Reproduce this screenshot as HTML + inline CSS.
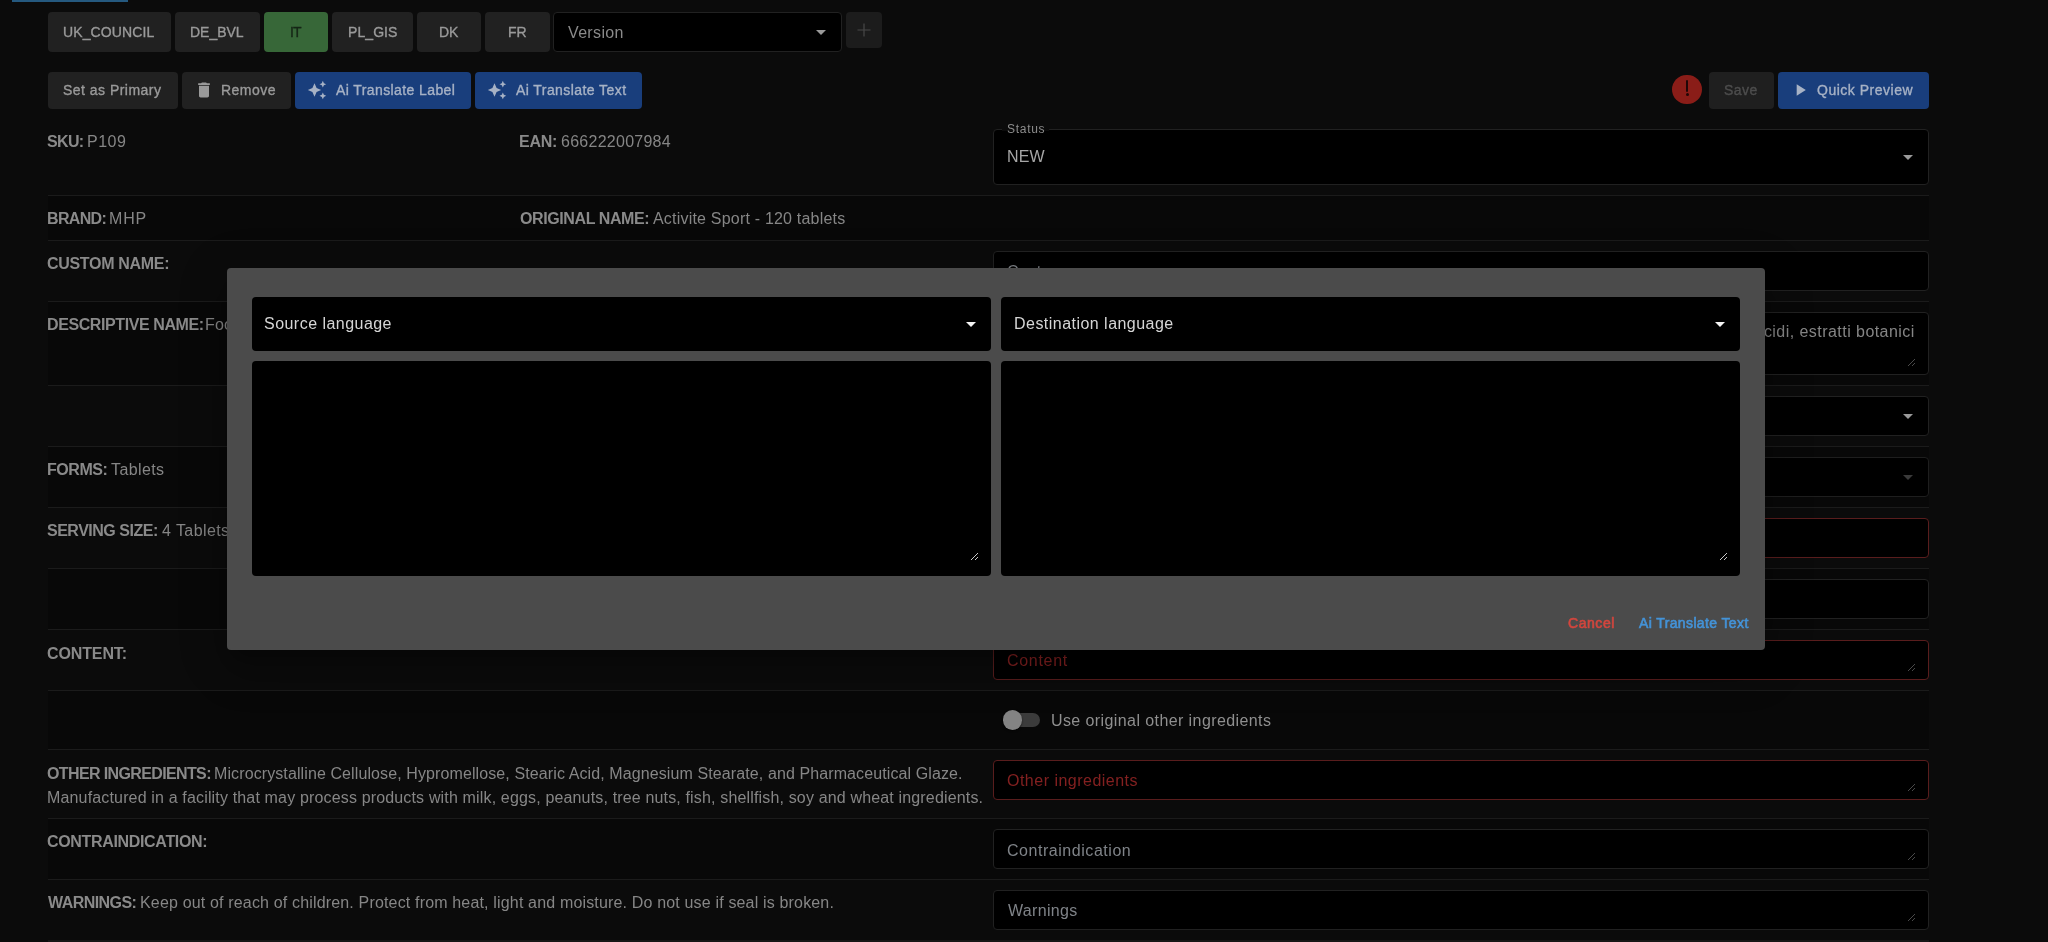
<!DOCTYPE html>
<html lang="en">
<head>
<meta charset="utf-8">
<title>Label editor</title>
<style>
*{box-sizing:border-box;margin:0;padding:0}
html,body{width:2048px;height:942px;overflow:hidden;background:#0b0b0b}
body{position:relative;font-family:"Liberation Sans",sans-serif;font-size:16px;color:#8d8d8d}
.abs{position:absolute}
.topbar{left:12px;top:0;width:115.500px;height:2px;background:#25597f}
.btn{position:absolute;height:36.500px;border-radius:4px;background:#212121}
.btn.tab{height:40px;top:12px}
.btn.green{background:#376738}
.btn.blue{background:#193e7c}
.btn.dis{background:#1f1f1f}
.btn svg{position:absolute}
.stripe{position:absolute;left:48px;width:1881px;background:#080808}
.sep{position:absolute;left:48px;width:1881px;height:1px;background:#1b1b1b}
.t{position:absolute;white-space:nowrap;will-change:transform}
.inp{position:absolute;left:993px;width:936px;height:40px;background:#000;border:1px solid #212121;border-radius:4px}
.inp.err{border-color:#591d1d}
.arrow{position:absolute;width:0;height:0;border-left:5px solid transparent;border-right:5px solid transparent;border-top:5px solid #9a9a9a}
.grip{position:absolute;width:9px;height:9px}
.dialog{left:227px;top:268px;width:1538px;height:382px;background:#4b4b4b;border-radius:4px;box-shadow:0 11px 15px -7px rgba(0,0,0,.25),0 24px 38px 3px rgba(0,0,0,.16),0 9px 46px 8px rgba(0,0,0,.14)}
.dsel{position:absolute;top:29px;width:739px;height:54px;background:#000;border-radius:4px}
.dta{position:absolute;top:93px;width:739px;height:215px;background:#000;border-radius:4px}
</style>
</head>
<body>
<div class="abs topbar"></div>

<!-- striped rows -->
<div class="stripe" style="top:196px;height:44px"></div>
<div class="stripe" style="top:302px;height:83px"></div>
<div class="stripe" style="top:447px;height:60px"></div>
<div class="stripe" style="top:569px;height:60px"></div>
<div class="stripe" style="top:691px;height:58px"></div>
<div class="stripe" style="top:819px;height:60px"></div>

<!-- tabs -->
<div class="btn tab" style="left:48px;width:123px"></div>
<div class="btn tab" style="left:175px;width:85px"></div>
<div class="btn tab green" style="left:264px;width:64px"></div>
<div class="btn tab" style="left:332px;width:81px"></div>
<div class="btn tab" style="left:417px;width:64px"></div>
<div class="btn tab" style="left:485px;width:65px"></div>
<div class="inp" style="left:553px;top:12px;width:289px;height:40px"><i class="arrow" style="left:262px;top:17px"></i></div>
<div class="btn" style="left:846px;top:12px;width:36px;height:36px;background:#1c1c1c">
<svg width="36" height="36" viewBox="0 0 36 36" style="left:0;top:0"><path d="M18 11.500v13M11.500 18h13" stroke="#484848" stroke-width="1.200" fill="none"/></svg></div>

<!-- actions -->
<div class="btn" style="left:48px;top:72px;width:130px"></div>
<div class="btn" style="left:182px;top:72px;width:109px">
<svg width="20" height="20" viewBox="0 0 24 24" style="left:12px;top:8px"><path fill="#9a9a9a" d="M6 19c0 1.100.900 2 2 2h8c1.100 0 2-.900 2-2V7H6v12zM19 4h-3.500l-1-1h-5l-1 1H5v2h14V4z"/></svg></div>
<div class="btn blue" style="left:295px;top:72px;width:176px">
<svg width="20" height="20" viewBox="0 0 24 24" style="left:12px;top:8px"><path fill="#a7b2c5" d="M19 9l1.250-2.750L23 5l-2.750-1.250L19 1l-1.250 2.750L15 5l2.750 1.250L19 9zm-7.500.500L9 4 6.500 9.500 1 12l5.500 2.500L9 20l2.500-5.500L17 12l-5.500-2.500zM19 15l-1.250 2.750L15 19l2.750 1.250L19 23l1.250-2.750L23 19l-2.750-1.250L19 15z"/></svg></div>
<div class="btn blue" style="left:475px;top:72px;width:167px">
<svg width="20" height="20" viewBox="0 0 24 24" style="left:12px;top:8px"><path fill="#a7b2c5" d="M19 9l1.250-2.750L23 5l-2.750-1.250L19 1l-1.250 2.750L15 5l2.750 1.250L19 9zm-7.500.500L9 4 6.500 9.500 1 12l5.500 2.500L9 20l2.500-5.500L17 12l-5.500-2.500zM19 15l-1.250 2.750L15 19l2.750 1.250L19 23l1.250-2.750L23 19l-2.750-1.250L19 15z"/></svg></div>

<div class="abs" style="left:1672.400px;top:74.800px;width:29.400px;height:29.400px;border-radius:50%;background:#8a1d18"></div>
<div class="abs" style="left:1685.800px;top:80px;width:2.600px;height:11.500px;background:#200707;border-radius:1px"></div>
<div class="abs" style="left:1685.600px;top:93.200px;width:3px;height:3.200px;background:#200707;border-radius:1.500px"></div>
<div class="btn dis" style="left:1709px;top:72px;width:65px"></div>
<div class="btn blue" style="left:1778px;top:72px;width:151px">
<svg width="20" height="20" viewBox="0 0 24 24" style="left:12px;top:8px"><path fill="#a7b2c5" d="M8 5v14l11-7z"/></svg></div>

<!-- row separators -->
<div class="sep" style="top:195px"></div>
<div class="sep" style="top:240px"></div>
<div class="sep" style="top:301px"></div>
<div class="sep" style="top:385px"></div>
<div class="sep" style="top:446px"></div>
<div class="sep" style="top:507px"></div>
<div class="sep" style="top:568px"></div>
<div class="sep" style="top:629px"></div>
<div class="sep" style="top:690px"></div>
<div class="sep" style="top:749px"></div>
<div class="sep" style="top:818px"></div>
<div class="sep" style="top:879px"></div>
<div class="sep" style="top:940px;height:2px;background:#161616"></div>

<!-- right column fields -->
<div class="inp" style="top:129px;height:56px"><i class="arrow" style="left:909px;top:25px"></i></div>
<div class="abs" style="left:1002px;top:128px;width:47px;height:3px;background:#0b0b0b"></div>
<div class="inp" style="top:251px"></div>
<div class="inp" style="top:312px;height:63px"><svg class="grip" style="right:12px;bottom:7px" viewBox="0 0 9 9"><path d="M1 8L8 1M5 8L8 5" stroke="#4a4a4a" stroke-width="1" fill="none"/></svg></div>
<div class="inp" style="top:396px"><i class="arrow" style="left:909px;top:17px"></i></div>
<div class="inp" style="top:457px;border-color:#1e1e1e"><i class="arrow" style="left:909px;top:17px;border-top-color:#3a3a3a"></i></div>
<div class="inp err" style="top:518px"></div>
<div class="inp" style="top:579px"></div>
<div class="inp err" style="top:640px"><svg class="grip" style="right:12px;bottom:7px" viewBox="0 0 9 9"><path d="M1 8L8 1M5 8L8 5" stroke="#4a4a4a" stroke-width="1" fill="none"/></svg></div>
<div class="abs" style="left:1005px;top:713px;width:35px;height:14px;border-radius:7px;background:#3b3b3b"></div>
<div class="abs" style="left:1002.500px;top:710.100px;width:19.700px;height:19.700px;border-radius:50%;background:#838383;box-shadow:0 1px 2px rgba(0,0,0,.6)"></div>
<div class="inp err" style="top:760px"><svg class="grip" style="right:12px;bottom:7px" viewBox="0 0 9 9"><path d="M1 8L8 1M5 8L8 5" stroke="#4a4a4a" stroke-width="1" fill="none"/></svg></div>
<div class="inp" style="top:829px"><svg class="grip" style="right:12px;bottom:7px" viewBox="0 0 9 9"><path d="M1 8L8 1M5 8L8 5" stroke="#4a4a4a" stroke-width="1" fill="none"/></svg></div>
<div class="inp" style="top:890px"><svg class="grip" style="right:12px;bottom:7px" viewBox="0 0 9 9"><path d="M1 8L8 1M5 8L8 5" stroke="#4a4a4a" stroke-width="1" fill="none"/></svg></div>

<!-- page text -->
<div class="t" style="left:62.72px;top:22px;font-size:14px;line-height:20px;height:20px;font-weight:400;color:#9a9a9a;letter-spacing:0.122px;-webkit-text-stroke:.35px currentColor;">UK_COUNCIL</div>
<div class="t" style="left:190.19px;top:22px;font-size:14px;line-height:20px;height:20px;font-weight:400;color:#9a9a9a;letter-spacing:-0.021px;-webkit-text-stroke:.35px currentColor;">DE_BVL</div>
<div class="t" style="left:290.48px;top:22px;font-size:14px;line-height:20px;height:20px;font-weight:400;color:#152616;letter-spacing:-0.871px;-webkit-text-stroke:.35px currentColor;">IT</div>
<div class="t" style="left:347.69px;top:22px;font-size:14px;line-height:20px;height:20px;font-weight:400;color:#9a9a9a;letter-spacing:0.077px;-webkit-text-stroke:.35px currentColor;">PL_GIS</div>
<div class="t" style="left:439.44px;top:22px;font-size:14px;line-height:20px;height:20px;font-weight:400;color:#9a9a9a;letter-spacing:-0.109px;-webkit-text-stroke:.35px currentColor;">DK</div>
<div class="t" style="left:507.94px;top:22px;font-size:14px;line-height:20px;height:20px;font-weight:400;color:#9a9a9a;letter-spacing:-0.034px;-webkit-text-stroke:.35px currentColor;">FR</div>
<div class="t" style="left:568.02px;top:21px;font-size:16px;line-height:24px;height:24px;font-weight:400;color:#8a8a8a;letter-spacing:0.342px;">Version</div>
<div class="t" style="left:63.28px;top:80px;font-size:14px;line-height:20px;height:20px;font-weight:400;color:#9a9a9a;letter-spacing:0.474px;-webkit-text-stroke:.35px currentColor;">Set as Primary</div>
<div class="t" style="left:220.94px;top:80px;font-size:14px;line-height:20px;height:20px;font-weight:400;color:#9a9a9a;letter-spacing:0.471px;-webkit-text-stroke:.35px currentColor;">Remove</div>
<div class="t" style="left:336.16px;top:80px;font-size:14px;line-height:20px;height:20px;font-weight:400;color:#a7b2c5;letter-spacing:0.400px;-webkit-text-stroke:.35px currentColor;">Ai Translate Label</div>
<div class="t" style="left:515.66px;top:80px;font-size:14px;line-height:20px;height:20px;font-weight:400;color:#a7b2c5;letter-spacing:0.425px;-webkit-text-stroke:.35px currentColor;">Ai Translate Text</div>
<div class="t" style="left:1724.33px;top:80px;font-size:14px;line-height:20px;height:20px;font-weight:400;color:#4d4d4d;letter-spacing:0.429px;-webkit-text-stroke:.35px currentColor;">Save</div>
<div class="t" style="left:1817.33px;top:80px;font-size:14px;line-height:20px;height:20px;font-weight:400;color:#a7b2c5;letter-spacing:0.512px;-webkit-text-stroke:.35px currentColor;">Quick Preview</div>
<div class="t" style="left:47.32px;top:130px;font-size:16px;line-height:24px;height:24px;font-weight:700;color:#8a8a8a;letter-spacing:-0.674px;">SKU:</div>
<div class="t" style="left:86.73px;top:130px;font-size:16px;line-height:24px;height:24px;font-weight:400;color:#868686;letter-spacing:0.471px;">P109</div>
<div class="t" style="left:519.44px;top:130px;font-size:16px;line-height:24px;height:24px;font-weight:700;color:#8a8a8a;letter-spacing:-0.247px;">EAN:</div>
<div class="t" style="left:560.50px;top:130px;font-size:16px;line-height:24px;height:24px;font-weight:400;color:#868686;letter-spacing:0.263px;">666222007984</div>
<div class="t" style="left:46.94px;top:207px;font-size:16px;line-height:24px;height:24px;font-weight:700;color:#8a8a8a;letter-spacing:-0.668px;">BRAND:</div>
<div class="t" style="left:109.03px;top:207px;font-size:16px;line-height:24px;height:24px;font-weight:400;color:#868686;letter-spacing:0.825px;">MHP</div>
<div class="t" style="left:519.84px;top:207px;font-size:16px;line-height:24px;height:24px;font-weight:700;color:#8a8a8a;letter-spacing:-0.400px;">ORIGINAL NAME:</div>
<div class="t" style="left:652.71px;top:207px;font-size:16px;line-height:24px;height:24px;font-weight:400;color:#868686;letter-spacing:0.200px;">Activite Sport - 120 tablets</div>
<div class="t" style="left:47.35px;top:252px;font-size:16px;line-height:24px;height:24px;font-weight:700;color:#8a8a8a;letter-spacing:-0.310px;">CUSTOM NAME:</div>
<div class="t" style="left:46.94px;top:313px;font-size:16px;line-height:24px;height:24px;font-weight:700;color:#8a8a8a;letter-spacing:-0.402px;">DESCRIPTIVE NAME:</div>
<div class="t" style="left:205.23px;top:313px;font-size:16px;line-height:24px;height:24px;font-weight:400;color:#868686;letter-spacing:0.150px;">Food supplement</div>
<div class="t" style="left:46.94px;top:458px;font-size:16px;line-height:24px;height:24px;font-weight:700;color:#8a8a8a;letter-spacing:-0.448px;">FORMS:</div>
<div class="t" style="left:111.09px;top:458px;font-size:16px;line-height:24px;height:24px;font-weight:400;color:#868686;letter-spacing:0.385px;">Tablets</div>
<div class="t" style="left:47.32px;top:519px;font-size:16px;line-height:24px;height:24px;font-weight:700;color:#8a8a8a;letter-spacing:-0.485px;">SERVING SIZE:</div>
<div class="t" style="left:161.67px;top:519px;font-size:16px;line-height:24px;height:24px;font-weight:400;color:#868686;letter-spacing:0.420px;">4 Tablets</div>
<div class="t" style="left:47.35px;top:642px;font-size:16px;line-height:24px;height:24px;font-weight:700;color:#8a8a8a;letter-spacing:-0.115px;">CONTENT:</div>
<div class="t" style="left:47.34px;top:762px;font-size:16px;line-height:24px;height:24px;font-weight:700;color:#8a8a8a;letter-spacing:-0.626px;">OTHER INGREDIENTS:</div>
<div class="t" style="left:213.93px;top:762px;font-size:16px;line-height:24px;height:24px;font-weight:400;color:#868686;letter-spacing:0.104px;">Microcrystalline Cellulose, Hypromellose, Stearic Acid, Magnesium Stearate, and Pharmaceutical Glaze.</div>
<div class="t" style="left:46.73px;top:786px;font-size:16px;line-height:24px;height:24px;font-weight:400;color:#868686;letter-spacing:0.158px;">Manufactured in a facility that may process products with milk, eggs, peanuts, tree nuts, fish, shellfish, soy and wheat ingredients.</div>
<div class="t" style="left:47.35px;top:830px;font-size:16px;line-height:24px;height:24px;font-weight:700;color:#8a8a8a;letter-spacing:-0.332px;">CONTRAINDICATION:</div>
<div class="t" style="left:47.89px;top:891px;font-size:16px;line-height:24px;height:24px;font-weight:700;color:#8a8a8a;letter-spacing:-0.552px;">WARNINGS:</div>
<div class="t" style="left:139.73px;top:891px;font-size:16px;line-height:24px;height:24px;font-weight:400;color:#868686;letter-spacing:0.165px;">Keep out of reach of children. Protect from heat, light and moisture. Do not use if seal is broken.</div>
<div class="t" style="left:1006.90px;top:121px;font-size:12px;line-height:16px;height:16px;font-weight:400;color:#8c8c8c;letter-spacing:0.712px;">Status</div>
<div class="t" style="left:1006.63px;top:145px;font-size:16px;line-height:24px;height:24px;font-weight:400;color:#a6a6a6;letter-spacing:0.183px;">NEW</div>
<div class="t" style="left:1006.90px;top:260px;font-size:16px;line-height:24px;height:24px;font-weight:400;color:#7f8388;letter-spacing:0.450px;">Custom name</div>
<div class="t" style="right:132.95px;top:320px;font-size:16px;line-height:24px;height:24px;font-weight:400;color:#858585;letter-spacing:0.450px;">Integratore alimentare con vitamine, minerali, aminoacidi, estratti botanici</div>
<div class="t" style="left:1006.70px;top:649px;font-size:16px;line-height:24px;height:24px;font-weight:400;color:#832020;letter-spacing:0.687px;">Content</div>
<div class="t" style="left:1050.50px;top:709px;font-size:16px;line-height:24px;height:24px;font-weight:400;color:#8f8f8f;letter-spacing:0.409px;">Use original other ingredients</div>
<div class="t" style="left:1006.90px;top:769px;font-size:16px;line-height:24px;height:24px;font-weight:400;color:#832020;letter-spacing:0.488px;">Other ingredients</div>
<div class="t" style="left:1006.90px;top:839px;font-size:16px;line-height:24px;height:24px;font-weight:400;color:#7f8388;letter-spacing:0.542px;">Contraindication</div>
<div class="t" style="left:1007.72px;top:899px;font-size:16px;line-height:24px;height:24px;font-weight:400;color:#7f8388;letter-spacing:0.334px;">Warnings</div>

<!-- dialog -->
<div class="abs dialog">
  <div class="dsel" style="left:25px"><i class="arrow" style="left:714px;top:25px;border-top-color:#f4f4f4"></i></div>
  <div class="dsel" style="left:774px"><i class="arrow" style="left:714px;top:25px;border-top-color:#f4f4f4"></i></div>
  <div class="dta" style="left:25px"><svg class="grip" style="right:12px;bottom:15px" viewBox="0 0 9 9"><path d="M1 8L8 1M5 8L8 5" stroke="#c8c8c8" stroke-width="1" fill="none"/></svg></div>
  <div class="dta" style="left:774px"><svg class="grip" style="right:12px;bottom:15px" viewBox="0 0 9 9"><path d="M1 8L8 1M5 8L8 5" stroke="#c8c8c8" stroke-width="1" fill="none"/></svg></div>
</div>
<div class="t" style="left:264.28px;top:312px;font-size:16px;line-height:24px;height:24px;font-weight:400;color:#d6d6d6;letter-spacing:0.466px;">Source language</div>
<div class="t" style="left:1013.93px;top:312px;font-size:16px;line-height:24px;height:24px;font-weight:400;color:#d6d6d6;letter-spacing:0.468px;">Destination language</div>
<div class="t" style="left:1567.51px;top:613px;font-size:14px;line-height:20px;height:20px;font-weight:400;color:#d3463e;letter-spacing:0.553px;-webkit-text-stroke:.6px currentColor;">Cancel</div>
<div class="t" style="left:1638.54px;top:613px;font-size:14px;line-height:20px;height:20px;font-weight:400;color:#4493d8;letter-spacing:0.378px;-webkit-text-stroke:.6px currentColor;">Ai Translate Text</div>
</body>
</html>
